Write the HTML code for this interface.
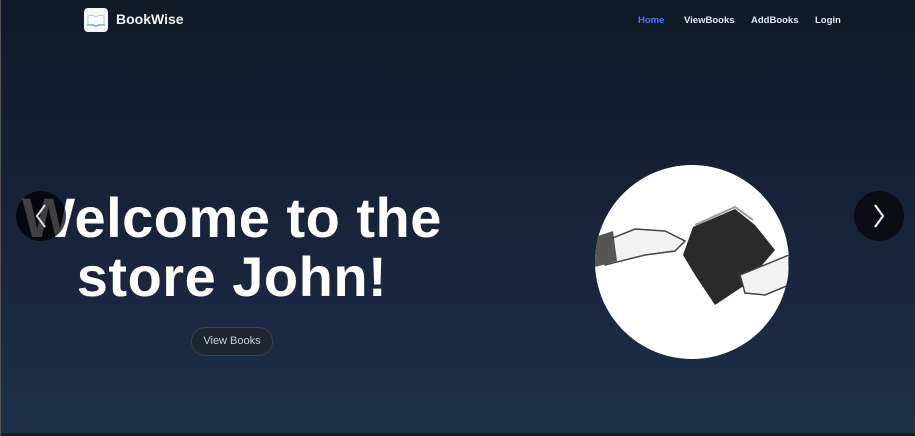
<!DOCTYPE html>
<html><head><style>
*{margin:0;padding:0;box-sizing:border-box}
body{width:915px;height:436px;overflow:hidden;font-family:"Liberation Sans","DejaVu Sans",sans-serif;background:linear-gradient(#111827 0,#131c2d 60px,#1a2740 300px,#1e3049 433px);position:relative;border-left:1px solid #555}
.bot{position:absolute;left:0;right:0;bottom:0;height:3px;background:#1b1d23}
.logo{position:absolute;left:83px;top:8px;width:24px;height:24px;background:#f4f6f8;border-radius:4px}
.brand{position:absolute;left:115px;top:11px;color:#f0f0f0;font-weight:bold;font-size:14px}
.nav a{position:absolute;top:15px;font-size:9.5px;font-weight:bold;color:#e5e7eb;text-decoration:none}
h1{position:absolute;left:0;width:462px;top:188px;text-align:center;color:#fff;font-size:56px;line-height:59px;font-weight:bold;letter-spacing:0.5px}
.btn{position:absolute;left:190px;top:327px;width:82px;height:29px;border-radius:15px;background:#1f2533;border:1px solid #3a4150;color:#c8ccd4;font-size:11px;text-align:center;line-height:27px}
.c{position:absolute;border-radius:50%}
</style></head><body>
<div class="logo"><svg width="24" height="24"><path d="M4 8q4-2 8 1q4-3 8-1v9q-4-2-8 1q-4-3-8-1z" fill="#fff" stroke="#aacfd6"/><path d="M3 17q4-1 9 1q5-2 9-1" stroke="#7fb9c2" fill="none" stroke-width="1.5"/></svg></div>
<div class="brand">BookWise</div>
<div class="nav"><a style="left:637px;color:#3b82f6">Home</a><a style="left:683px">ViewBooks</a><a style="left:750px">AddBooks</a><a style="left:814px">Login</a></div>
<h1>Welcome to the<br>store John!</h1>
<div class="btn">View Books</div>
<div class="c" style="left:594px;top:165px;width:194px;height:194px;background:#fff;overflow:hidden">
<svg width="194" height="194"><path d="M0 80 L40 64 L70 66 L90 76 L80 86 L50 90 L10 100 Z" fill="#f2f2f2" stroke="#444" stroke-width="1.5"/><path d="M0 72 L18 66 L22 96 L0 102Z" fill="#555"/><path d="M98 62 L140 44 L160 60 L180 85 L150 120 L120 140 L100 110 L88 90 Z" fill="#2a2a2a"/><path d="M100 60 L140 42 L158 55" fill="none" stroke="#999" stroke-width="2"/><path d="M145 110 L194 90 L194 120 L170 130 L150 128 Z" fill="#f2f2f2" stroke="#444" stroke-width="1.5"/></svg></div>
<div class="c" style="left:15px;top:191px;width:50px;height:50px;background:rgba(0,0,0,.75)"></div>
<svg style="position:absolute;left:15px;top:191px" width="50" height="50"><path d="M29 14 L21 25 L29 36" stroke="#ddd" stroke-width="2" fill="none"/></svg>
<div class="c" style="left:853px;top:191px;width:50px;height:50px;background:#0b0d12"></div>
<svg style="position:absolute;left:853px;top:191px" width="50" height="50"><path d="M21 14 L29 25 L21 36" stroke="#fff" stroke-width="2" fill="none"/></svg>
<div class="bot"></div>
</body></html>
